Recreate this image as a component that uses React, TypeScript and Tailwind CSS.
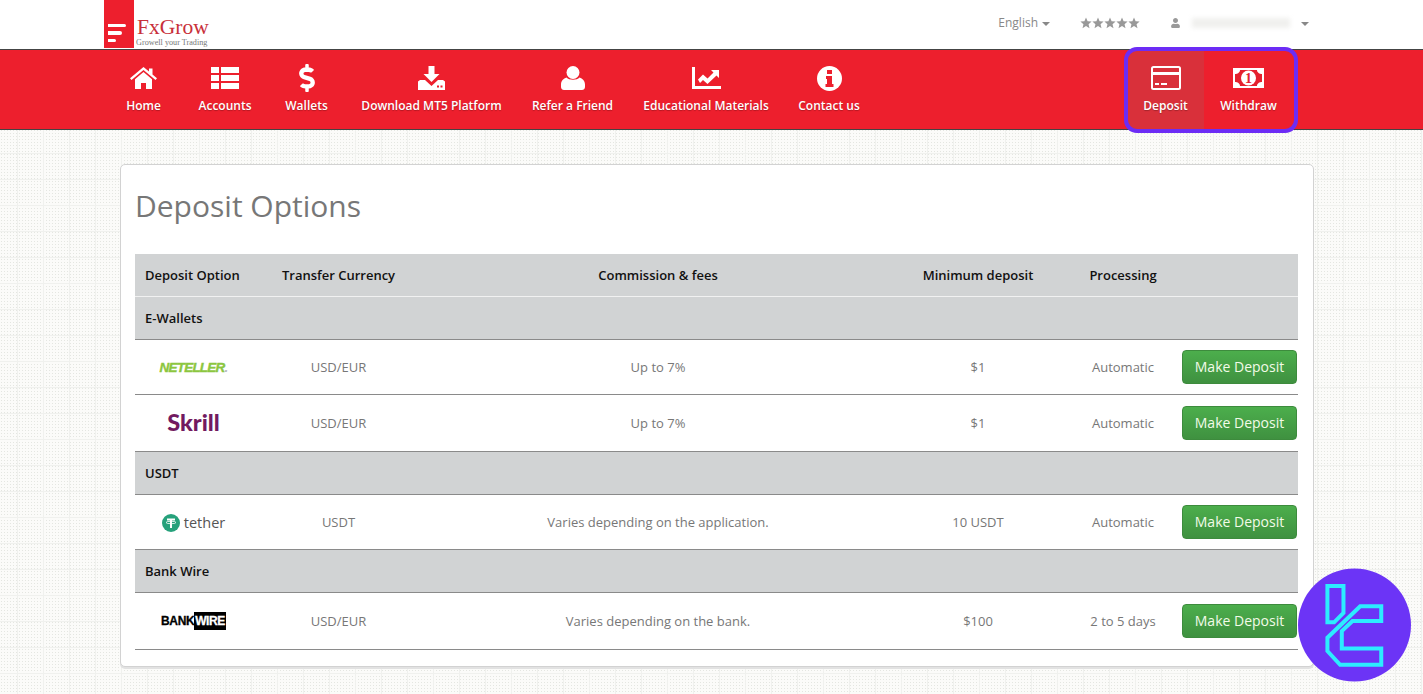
import { FaDollarSign, FaUser } from "react-icons/fa";
import { ReactNode } from "react";

const HomeIcon = () => (
  <svg viewBox="0 0 27 22" className="h-[22px] w-[27px]" fill="white">
    <path d="M13.500 0 0 11.200l1.500 1.800L13.500 3l12 10 1.500-1.800-4.500-3.700V1.500h-3.500v3L13.500 0Z" />
    <path d="M13.500 5 5 12.200V22h6v-6h5v6h6v-9.800L13.500 5Z" />
  </svg>
);

const ListIcon = () => (
  <svg viewBox="0 0 28 22" className="h-[22px] w-[28px]" fill="white">
    <rect x="0" y="0" width="8" height="6" />
    <rect x="10" y="0" width="18" height="6" />
    <rect x="0" y="8" width="8" height="6" />
    <rect x="10" y="8" width="18" height="6" />
    <rect x="0" y="16" width="8" height="6" />
    <rect x="10" y="16" width="18" height="6" />
  </svg>
);

const DownloadIcon = () => (
  <svg viewBox="0 0 27 24" className="h-[24px] w-[27px]" fill="white">
    <path d="M10.500 0h6v8h5l-8 8-8-8h5V0Z" />
    <path d="M0 15.500 2 14h5l6.500 6 6.500-6h5l2 1.500V24H0v-8.500Z" />
    <rect x="19" y="19.500" width="2" height="2" fill="#ed1f2d" />
    <rect x="22.500" y="19.500" width="2" height="2" fill="#ed1f2d" />
  </svg>
);

const PersonIcon = () => (
  <svg viewBox="0 0 24 24" className="h-[24px] w-[24px]" fill="white">
    <circle cx="12" cy="6.500" r="6.500" />
    <path d="M5.500 11.500C8 14.500 16 14.500 18.500 11.500 21.500 12.500 24 15 24 18.500V21c0 2-1.500 3-3 3H3c-1.500 0-3-1-3-3v-2.500C0 15 2.500 12.500 5.500 11.500Z" />
  </svg>
);

const ChartIcon = () => (
  <svg viewBox="0 0 29 22" className="h-[22px] w-[29px]" fill="white">
    <path d="M0 0h3v19h26v3H0V0Z" />
    <path d="M6 12.500 11 7.500l4.500 4 6-6L19 3h8v8l-2.500-2.500-9 8.500-4.500-4-3 3L6 12.500Z" />
  </svg>
);

const InfoIcon = () => (
  <svg viewBox="0 0 25 25" className="h-[25px] w-[25px]">
    <circle cx="12.500" cy="12.500" r="12.500" fill="white" />
    <rect x="10" y="4" width="5" height="4" fill="#ed1f2d" />
    <path d="M9 10h6v8h1.500v3h-8v-3H10v-5H9v-3Z" fill="#ed1f2d" />
  </svg>
);

const CardIcon = () => (
  <svg viewBox="0 0 30 24" className="h-[24px] w-[30px]">
    <rect x="1" y="1" width="28" height="22" rx="1.500" fill="none" stroke="white" strokeWidth="2" />
    <rect x="1" y="6" width="28" height="3" fill="white" />
    <rect x="4" y="17" width="4" height="2" fill="white" />
    <rect x="10" y="17" width="6" height="2" fill="white" />
  </svg>
);

const MoneyIcon = () => (
  <svg viewBox="0 0 31 20" className="h-[20px] w-[31px]">
    <rect width="31" height="20" fill="white" />
    <path d="M7 2h17c0 2.500 2.500 4 5 4v8c-2.500 0-5 1.500-5 4H7c0-2.500-2.500-4-5-4V6c2.500 0 5-1.500 5-4Z" fill="#e5202e" />
    <circle cx="15.500" cy="10" r="7.500" fill="white" />
    <text x="15.500" y="15" textAnchor="middle" fontSize="14" fontWeight="700" fontFamily="'Liberation Serif', serif" fill="#e5202e">1</text>
  </svg>
);

const Star = () => (
  <svg viewBox="0 0 24 24" className="h-[12px] w-[12px]" fill="#999">
    <path d="m12 1 3.200 7.400 8 .7-6.100 5.300 1.900 7.900L12 18.100l-7 4.200 1.900-7.900L.8 9.100l8-.7L12 1Z" />
  </svg>
);

const navItems: { label: string; icon: ReactNode; width: string }[] = [
  { label: "Home", icon: <HomeIcon />, width: "w-[65px]" },
  { label: "Accounts", icon: <ListIcon />, width: "w-[98px]" },
  { label: "Wallets", icon: <FaDollarSign className="h-[28px] w-[16px] text-white" />, width: "w-[65px]" },
  { label: "Download MT5 Platform", icon: <DownloadIcon />, width: "w-[185px]" },
  { label: "Refer a Friend", icon: <PersonIcon />, width: "w-[97px]" },
  { label: "Educational Materials", icon: <ChartIcon />, width: "w-[170px]" },
  { label: "Contact us", icon: <InfoIcon />, width: "w-[76px]" },
];

function NavItem({ label, icon, className }: { label: string; icon: ReactNode; className: string }) {
  return (
    <div className={`flex h-full flex-col items-center ${className}`}>
      <div className="mt-[14px] flex h-[28px] items-center justify-center">{icon}</div>
      <span className="mt-[5px] whitespace-nowrap text-[12px] leading-[18px] font-semibold text-white [text-shadow:0_1px_1px_rgba(0,0,0,0.25)]">
        {label}
      </span>
    </div>
  );
}

const COLS = "grid grid-cols-[137px_133px_506px_134px_126px_127px] items-center";

function GroupRow({ label }: { label: string }) {
  return (
    <div className="flex h-[43px] items-center border-b border-[#8a8a8a] bg-[#d1d3d4] pt-[2px] pl-[10px] text-[13px] font-[550] text-[#111]">
      {label}
    </div>
  );
}

function OptionRow({ logo, currency, fees, min, processing, height }: {
  logo: ReactNode; currency: string; fees: string; min: string; processing: string; height: string;
}) {
  return (
    <div className={`${COLS} ${height} border-b border-[#8a8a8a] text-center text-[13px] text-[#777]`}>
      <div className="flex items-center justify-center pr-[20px]">{logo}</div>
      <div className="pt-[2px]">{currency}</div>
      <div className="pt-[2px]">{fees}</div>
      <div className="pt-[2px]">{min}</div>
      <div className="pt-[2px] pl-[30px]">{processing}</div>
      <div className="flex justify-end pr-[1px]">
        <button className="h-[34px] w-[115px] rounded-[4px] border border-[#3d8b3d] bg-gradient-to-b from-[#4cae4c] to-[#3f9140] pb-[2px] text-[14px] text-[#f2fbe8]">
          Make Deposit
        </button>
      </div>
    </div>
  );
}

export default function App() {
  return (
    <div className="relative h-[694px] overflow-hidden bg-[#fbfbf9] bg-[linear-gradient(#f0f1ee_1px,transparent_1px),linear-gradient(90deg,#f0f1ee_1px,transparent_1px),radial-gradient(#e4e6e1_1px,transparent_1px)] bg-[length:26px_26px,26px_26px,3px_3px] bg-[position:17px_23px,17px_23px,0_0] [font-family:'Open_Sans',sans-serif]">
      <header className="flex h-[49px] bg-white">
        <div className="ml-[104px] flex h-[48px] w-[30px] flex-col items-start justify-end gap-[4px] bg-[#ed1f2d] pb-[6px] pl-[4px]">
          <div className="h-[3.500px] w-[18px] rounded-r-full bg-white" />
          <div className="h-[3.500px] w-[14px] rounded-r-full bg-white" />
          <div className="h-[3.500px] w-[8px] rounded-r-full bg-white" />
        </div>
        <div className="ml-[2px] flex flex-col justify-end pb-[1px] [font-family:'Liberation_Serif',serif]">
          <div className="ml-[1px] text-[21.500px] leading-[21px] text-[#c8303a]">FxGrow</div>
          <div className="text-[8.200px] leading-[10px] text-[#777]">Growell your Trading</div>
        </div>
        <div className="ml-auto flex items-center pr-[114px] pb-[3px] text-[12px] text-[#888]">
          <span>English</span>
          <span className="ml-[4px] mt-[1px] h-0 w-0 border-x-[4px] border-t-[4px] border-x-transparent border-t-[#888]" />
          <div className="ml-[30px] flex">
            {[0, 1, 2, 3, 4].map((i) => (
              <Star key={i} />
            ))}
          </div>
          <FaUser className="ml-[31px] h-[10px] w-[9px] text-[#999]" />
          <div className="ml-[12px] h-[10px] w-[98px] bg-[#f0f0ee] blur-[2px]" />
          <span className="ml-[11px] mt-[1px] h-0 w-0 border-x-[4px] border-t-[4px] border-x-transparent border-t-[#888]" />
        </div>
      </header>

      <nav className="flex h-[81px] border-y border-[#444] bg-[#ed1f2d] pl-[111px]">
        {navItems.map((item) => (
          <NavItem key={item.label} label={item.label} icon={item.icon} className={item.width} />
        ))}
        <div className="ml-[260px] flex h-full">
          <NavItem label="Deposit" icon={<CardIcon />} className="w-[77px] bg-[#d9303a]" />
          <NavItem label="Withdraw" icon={<MoneyIcon />} className="w-[89px]" />
        </div>
      </nav>

      {/* purple highlight around deposit + withdraw */}
      <div className="absolute top-[47px] left-[1124px] h-[86px] w-[174px] rounded-[13px] border-[4px] border-[#6c2cf5]" />

      <main className="ml-[120px] mt-[34px] h-[503px] w-[1194px] rounded-[5px] border border-[#d2d2d2] bg-white pr-[15px] pl-[14px] shadow-[0_2px_0_#e2e2e2]">
        <h1 className="h-[89px] pt-[19px] text-[30px] leading-[44px] text-[#777]">Deposit Options</h1>

        <div className={`${COLS} h-[43px] border-b border-[#f1f1f1] bg-[#d1d3d4] pt-[2px] text-center text-[13px] font-[550] text-[#111]`}>
          <div className="pl-[10px] text-left">Deposit Option</div>
          <div>Transfer Currency</div>
          <div>Commission &amp; fees</div>
          <div>Minimum deposit</div>
          <div className="pl-[30px]">Processing</div>
          <div />
        </div>

        <GroupRow label="E-Wallets" />
        <OptionRow
          height="h-[55px]"
          currency="USD/EUR"
          fees="Up to 7%"
          min="$1"
          processing="Automatic"
          logo={
            <span className="pt-[2px] text-[13.500px] font-bold italic tracking-[-0.8px] text-[#8cc63f] [-webkit-text-stroke:0.4px_#8cc63f] [font-family:'Liberation_Sans',sans-serif]">
              NETELLER<span className="text-[#bbb] [-webkit-text-stroke:0]">.</span>
            </span>
          }
        />
        <OptionRow
          height="h-[57px]"
          currency="USD/EUR"
          fees="Up to 7%"
          min="$1"
          processing="Automatic"
          logo={<span className="-mt-[2px] text-[23.500px] leading-[24px] font-black text-[#721a60] [font-family:Lato,sans-serif]">Skrill</span>}
        />
        <GroupRow label="USDT" />
        <OptionRow
          height="h-[55px]"
          currency="USDT"
          fees="Varies depending on the application."
          min="10 USDT"
          processing="Automatic"
          logo={
            <span className="flex items-center gap-[4px] pt-[2px]">
              <svg viewBox="0 0 18 18" className="h-[18px] w-[18px]">
                <circle cx="9" cy="9" r="9" fill="#26a17b" />
                <path d="M5 4.500h8v2H10v7.500H8V6.500H5v-2Z" fill="white" />
                <ellipse cx="9" cy="8.500" rx="5" ry="1.200" fill="none" stroke="white" strokeWidth="0.800" />
              </svg>
              <span className="text-[14.500px] leading-[18px] font-medium text-[#555]">tether</span>
            </span>
          }
        />
        <GroupRow label="Bank Wire" />
        <OptionRow
          height="h-[57px]"
          currency="USD/EUR"
          fees="Varies depending on the bank."
          min="$100"
          processing="2 to 5 days"
          logo={
            <span className="flex items-center text-[12px] leading-[18px] font-bold tracking-[-0.4px] [-webkit-text-stroke:0.3px] [font-family:'Liberation_Sans',sans-serif]">
              <span className="text-black">BANK</span>
              <span className="bg-black px-[1px] text-white">WIRE</span>
            </span>
          }
        />
      </main>

      {/* watermark badge */}
      <svg viewBox="414 24 338 340" className="absolute top-[568px] left-[1298px] h-[114px] w-[113px]">
        <circle cx="583" cy="194" r="169" fill="#6c34f6" />
        <g fill="none" stroke="#2cecff" strokeWidth="12">
          <path d="M502 77H550V158L522 186H502Z" />
          <path d="M600 138H663V182H577L545 212V264H663V313H540L502 272V232Z" />
        </g>
      </svg>
    </div>
  );
}
